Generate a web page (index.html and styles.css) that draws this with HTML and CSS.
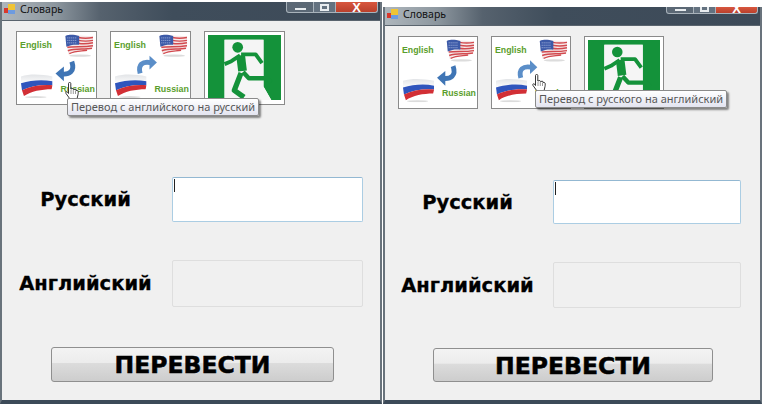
FILE: index.html
```html
<!DOCTYPE html>
<html lang="ru">
<head>
    <meta charset="UTF-8">
    <title>Словарь</title>
    <link rel="stylesheet" href="styles.css">
</head>
<body>
    <svg class="defs" width="0" height="0">
        <defs>
            <linearGradient id="ru-white" x1="0" y1="0" x2="0" y2="1">
                <stop offset="0" stop-color="#e2e4e7"/>
                <stop offset="1" stop-color="#fdfdfd"/>
            </linearGradient>
            <symbol id="flag-us" viewBox="0 0 30 25">
                <ellipse cx="16" cy="23" rx="11" ry="1.2" fill="#dcdcdc"/>
                <path d="M1 3C9 0 17 4 29 3L29 15C20 17 10 18 4 22Z" fill="#f6e9e9"/>
                <g fill="none" stroke="#d24a4f" stroke-width="1.5">
                    <path d="M14 4.500C19 5.500 24 5.500 29 4.500"/>
                    <path d="M14 7.500C19 8.500 24 8.500 29 7.500"/>
                    <path d="M14 10.500C19 11.500 24 11 29 10"/>
                    <path d="M3 14.500C11 13.500 20 14.500 29 13"/>
                    <path d="M3.500 18C11 15.500 20 17 28 15.500"/>
                    <path d="M5 21C11 18 17 18.500 23 17.500"/>
                </g>
                <path d="M1 3C6 1 10 2 15 3L15 12C10 11.500 6 12 2 14Z" fill="#3c5aa8"/>
                <path d="M3 5H13M3 7.500H13M3 10H13" stroke="#a9b8e0" stroke-width="1" stroke-dasharray="1 1"/>
            </symbol>
            <symbol id="flag-ru" viewBox="0 0 32 25">
                <ellipse cx="15" cy="24" rx="11" ry="1" fill="#dcdcdc"/>
                <path d="M0 3C10 0 21 1 32 3L32 8C21 6 10 7 0 10Z" fill="url(#ru-white)"/>
                <path d="M0 10C10 7 21 6 32 8L32 12C21 11 10 13 1 17Z" fill="#2f55bd"/>
                <path d="M1 17C10 13 21 11 32 12L31 16C21 16 10 18 3 23Z" fill="#d22f35"/>
            </symbol>
            <symbol id="hand" viewBox="0 0 14 18">
                <path d="M3.500 1.500C3.500 0 5.800 0 5.800 1.500V7L7.800 6.500 8.500 7.500 10.500 7.200 11 8.300 12.500 8.500C13.500 9 13.300 11 13 12.500L12 17H5L1 11.500C0.300 10 1.500 9.300 2.500 10L3.500 11.500Z" fill="#fff" stroke="#222" stroke-width=".9"/>
                <path d="M6 8V12M8.300 8V12M10.500 8.500V12" stroke="#555" stroke-width=".6"/>
            </symbol>
            <symbol id="exit-sign" viewBox="0 0 81 74">
                <path d="M3 3H78V70H68L60 56V8H20V70H3Z" fill="#14923a"/>
                <path d="M20 8H60V56L68 70H20Z" fill="#f5f5f5"/>
                <circle cx="33.500" cy="15.700" r="5.500" fill="#14923a"/>
                <g fill="none" stroke="#14923a" stroke-linejoin="round">
                    <path d="M36.500 24L38.500 40" stroke-width="9"/>
                    <path d="M36 24L27 30 20 33" stroke-width="4"/>
                    <path d="M37 23H52L58.500 32" stroke-width="4"/>
                    <path d="M39 41L45 47.500H63.500L68 52" stroke-width="4.500"/>
                    <path d="M37 42L30 60 40 67" stroke-width="5.500"/>
                </g>
            </symbol>
        </defs>
    </svg>

    <div class="screen">
        <div class="window window-left">
            <div class="titlebar">
                <svg class="app-icon" viewBox="0 0 12 12"><rect x="0" y="5" width="4" height="5" fill="#d9382c"/><rect x="4" y="1" width="7" height="6" fill="#f0c435"/><rect x="4" y="7" width="7" height="4" fill="#6d9be0"/></svg>
                <span class="title">Словарь</span>
                <div class="controls">
                    <span class="ctl ctl-min"><i></i></span>
                    <span class="ctl ctl-max"><i></i></span>
                    <span class="ctl ctl-close">X</span>
                </div>
            </div>
            <div class="client">
                <div class="tools">
                    <div class="tool">
                        <svg class="tool-img" viewBox="0 0 80 73">
                            <text class="lang" x="3" y="16">English</text>
                            <use href="#flag-us" x="48" y="1" width="30" height="25"/>
                            <path d="M55.500 30C59 40 53 43.500 45 42.500" fill="none" stroke="#3f75b5" stroke-width="5"/>
                            <path d="M39 42L47.500 35V50Z" fill="#3f75b5"/>
                            <use href="#flag-ru" x="4" y="42" width="32" height="25"/>
                            <text class="lang" x="44" y="61">Russian</text>
                        </svg>
                    </div>
                    <div class="tool">
                        <svg class="tool-img" viewBox="0 0 80 73">
                            <text class="lang" x="3" y="16">English</text>
                            <use href="#flag-us" x="48" y="1" width="30" height="25"/>
                            <path d="M29.500 42C27 33 32 29.500 40 31" fill="none" stroke="#5b8ec8" stroke-width="5"/>
                            <path d="M46.500 31L39 24V38Z" fill="#5b8ec8"/>
                            <use href="#flag-ru" x="4" y="42" width="32" height="25"/>
                            <text class="lang" x="44" y="61">Russian</text>
                        </svg>
                    </div>
                    <div class="tool">
                        <svg class="tool-img" viewBox="0 0 81 74"><use href="#exit-sign"/></svg>
                    </div>
                </div>
                <div class="row row-first">
                    <label class="label">Русский</label>
                    <div class="field field-on"><span class="caret"></span></div>
                </div>
                <div class="row row-second">
                    <label class="label">Английский</label>
                    <div class="field field-off"></div>
                </div>
                <div class="btn">ПЕРЕВЕСТИ</div>
                <svg class="hand"><use href="#hand"/></svg>
                <div class="tooltip">Перевод с английского на русский</div>
            </div>
        </div>

        <div class="window window-right">
            <div class="titlebar">
                <svg class="app-icon" viewBox="0 0 12 12"><rect x="0" y="5" width="4" height="5" fill="#d9382c"/><rect x="4" y="1" width="7" height="6" fill="#f0c435"/><rect x="4" y="7" width="7" height="4" fill="#6d9be0"/></svg>
                <span class="title">Словарь</span>
                <div class="controls">
                    <span class="ctl ctl-min"><i></i></span>
                    <span class="ctl ctl-max"><i></i></span>
                    <span class="ctl ctl-close">X</span>
                </div>
            </div>
            <div class="client">
                <div class="tools">
                    <div class="tool">
                        <svg class="tool-img" viewBox="0 0 80 73">
                            <text class="lang" x="3" y="16">English</text>
                            <use href="#flag-us" x="48" y="1" width="30" height="25"/>
                            <path d="M55.500 30C59 40 53 43.500 45 42.500" fill="none" stroke="#3f75b5" stroke-width="5"/>
                            <path d="M39 42L47.500 35V50Z" fill="#3f75b5"/>
                            <use href="#flag-ru" x="4" y="42" width="32" height="25"/>
                            <text class="lang" x="44" y="61">Russian</text>
                        </svg>
                    </div>
                    <div class="tool">
                        <svg class="tool-img" viewBox="0 0 80 73">
                            <text class="lang" x="3" y="16">English</text>
                            <use href="#flag-us" x="48" y="1" width="30" height="25"/>
                            <path d="M29.500 42C27 33 32 29.500 40 31" fill="none" stroke="#5b8ec8" stroke-width="5"/>
                            <path d="M46.500 31L39 24V38Z" fill="#5b8ec8"/>
                            <use href="#flag-ru" x="4" y="42" width="32" height="25"/>
                            <text class="lang" x="44" y="61">Russian</text>
                        </svg>
                    </div>
                    <div class="tool">
                        <svg class="tool-img" viewBox="0 0 81 74"><use href="#exit-sign"/></svg>
                    </div>
                </div>
                <div class="row row-first">
                    <label class="label">Русский</label>
                    <div class="field field-on"><span class="caret"></span></div>
                </div>
                <div class="row row-second">
                    <label class="label">Английский</label>
                    <div class="field field-off"></div>
                </div>
                <div class="btn">ПЕРЕВЕСТИ</div>
                <svg class="hand"><use href="#hand"/></svg>
                <div class="tooltip">Перевод с русского на английский</div>
            </div>
        </div>
    </div>
</body>
</html>
```

FILE: styles.css
```css
body {
    margin: 0;
    background: white;
    font-family: "Liberation Sans", Arial, sans-serif;
    overflow: hidden;
}

.defs {
    display: block;
    height: 0;
}

.screen {
    display: flex;
    gap: 1px;
    width: 764px;
    height: 407px;
    align-items: flex-start;
}

/* each window has its own sizes, the two shots are not quite the same */
.window {
    display: flex;
    flex-direction: column;
    box-sizing: border-box;
    border: solid #69737c;
    border-width: 0 2px 4px 2px;
    border-bottom-color: #3c4a58;
}

.window-left {
    width: 382px;
    height: 402px;
    margin-top: 2px;
    --title-h: 19px;
    --ctl-h: 11px;
    --tools-left: 14px;
    --tools-top: 10px;
    --tool-w: 81px;
    --tool-h: 74px;
    --label-w: 167px;
    --label-gap: 3px;
    --field-w: 191px;
    --row1-top: 72px;
    --row1-h: 45px;
    --row2-top: 38px;
    --row2-h: 47px;
    --btn-top: 40px;
    --btn-left: 49px;
    --btn-w: 283px;
    --btn-h: 35px;
    --hand-x: 63px;
    --hand-y: 61px;
    --tip-x: 65px;
    --tip-y: 77px;
}

.window-right {
    width: 379px;
    height: 397px;
    margin-top: 7px;
    --title-h: 19px;
    --ctl-h: 7px;
    --tools-left: 13px;
    --tools-top: 10px;
    --tool-w: 80px;
    --tool-h: 73px;
    --label-w: 165px;
    --label-gap: 3px;
    --field-w: 188px;
    --row1-top: 71px;
    --row1-h: 44px;
    --row2-top: 38px;
    --row2-h: 46px;
    --btn-top: 40px;
    --btn-left: 48px;
    --btn-w: 280px;
    --btn-h: 34px;
    --hand-x: 147px;
    --hand-y: 48px;
    --tip-x: 150px;
    --tip-y: 64px;
}

.titlebar {
    display: flex;
    align-items: flex-start;
    height: var(--title-h);
    flex-shrink: 0;
    background: linear-gradient(90deg, #aeb6bc 0, #8d979f 14%, #56626e 26%, #3f4d5b 45%, #3d4a58 100%);
    border-bottom: 1px solid #5a646e;
    box-sizing: border-box;
}

.app-icon {
    width: 12px;
    height: 12px;
    margin: 1px 4px 0 2px;
}

.title {
    font-family: "Noto Sans", sans-serif;
    font-size: 10.5px;
    line-height: 14px;
    color: #111;
}

.controls {
    display: flex;
    margin-left: auto;
    margin-right: 2px;
    height: var(--ctl-h);
}

.ctl {
    display: flex;
    justify-content: center;
    align-items: flex-end;
    box-sizing: border-box;
    border: 1px solid #a8b2ba;
    border-top: 0;
    color: white;
    overflow: hidden;
}

.ctl-min {
    width: 28px;
    background: #5b6875;
    border-radius: 0 0 0 3px;
}

.ctl-min i {
    width: 11px;
    height: 2px;
    margin-bottom: 2px;
    background: #e8ecef;
}

.ctl-max {
    width: 22px;
    background: #647280;
    border-left: 0;
}

.ctl-max i {
    width: 9px;
    height: 7px;
    margin-bottom: 1px;
    box-sizing: border-box;
    border: 2px solid #e8ecef;
}

.ctl-close {
    width: 42px;
    background: linear-gradient(#d8573f, #b9402c);
    border-left: 0;
    border-radius: 0 0 3px 0;
    font-weight: bold;
    font-size: 13px;
    line-height: 9px;
}

.client {
    position: relative;
    flex: 1;
    background: #f0f0f0;
}

.tools {
    display: flex;
    gap: 13px;
    padding: var(--tools-top) 0 0 var(--tools-left);
}

.tool {
    width: var(--tool-w);
    height: var(--tool-h);
    box-sizing: border-box;
    border: 1px solid #8a8a8a;
    background: white;
}

.tool-img {
    display: block;
    width: 100%;
    height: 100%;
}

.lang {
    font-family: "Liberation Sans", sans-serif;
    font-size: 9px;
    font-weight: bold;
    fill: #5a9e2d;
}

.row {
    display: flex;
    align-items: center;
    gap: var(--label-gap);
}

.row-first {
    margin-top: var(--row1-top);
    height: var(--row1-h);
}

.row-second {
    margin-top: var(--row2-top);
    height: var(--row2-h);
}

.label {
    width: var(--label-w);
    text-align: center;
    font-family: "DejaVu Sans", sans-serif;
    font-size: 19.5px;
    font-weight: bold;
    color: black;
    -webkit-text-stroke: 0.3px black;
}

.field {
    width: var(--field-w);
    height: 100%;
    box-sizing: border-box;
    border-radius: 2px;
}

.field-on {
    background: white;
    border: 1px solid #abcde3;
    border-top-color: #93b8d2;
    padding: 1px;
}

.field-off {
    background: #f0f0f0;
    border: 1px solid #dedede;
}

.caret {
    display: block;
    width: 1px;
    height: 13px;
    background: #222;
}

.btn {
    margin: var(--btn-top) 0 0 var(--btn-left);
    width: var(--btn-w);
    height: var(--btn-h);
    box-sizing: border-box;
    border: 1px solid #8f8f8f;
    border-radius: 3px;
    background: linear-gradient(#f3f3f3 0, #ececec 45%, #dcdcdc 46%, #cdcdcd 100%);
    text-align: center;
    font-family: "DejaVu Sans", sans-serif;
    font-size: 23.5px;
    line-height: 35px;
    font-weight: bold;
    color: black;
    -webkit-text-stroke: 0.5px black;
}

.hand {
    position: absolute;
    left: var(--hand-x);
    top: var(--hand-y);
    width: 14px;
    height: 18px;
}

.tooltip {
    position: absolute;
    left: var(--tip-x);
    top: var(--tip-y);
    box-sizing: border-box;
    height: 18px;
    padding: 0 3px;
    border: 1px solid #8b8b8b;
    border-radius: 2px;
    background: linear-gradient(#ffffff, #e3e4f0);
    box-shadow: 2px 2px 2px rgba(0, 0, 0, 0.45);
    font-family: "Noto Sans", sans-serif;
    font-size: 11px;
    line-height: 16px;
    color: #575757;
    white-space: nowrap;
}
```
